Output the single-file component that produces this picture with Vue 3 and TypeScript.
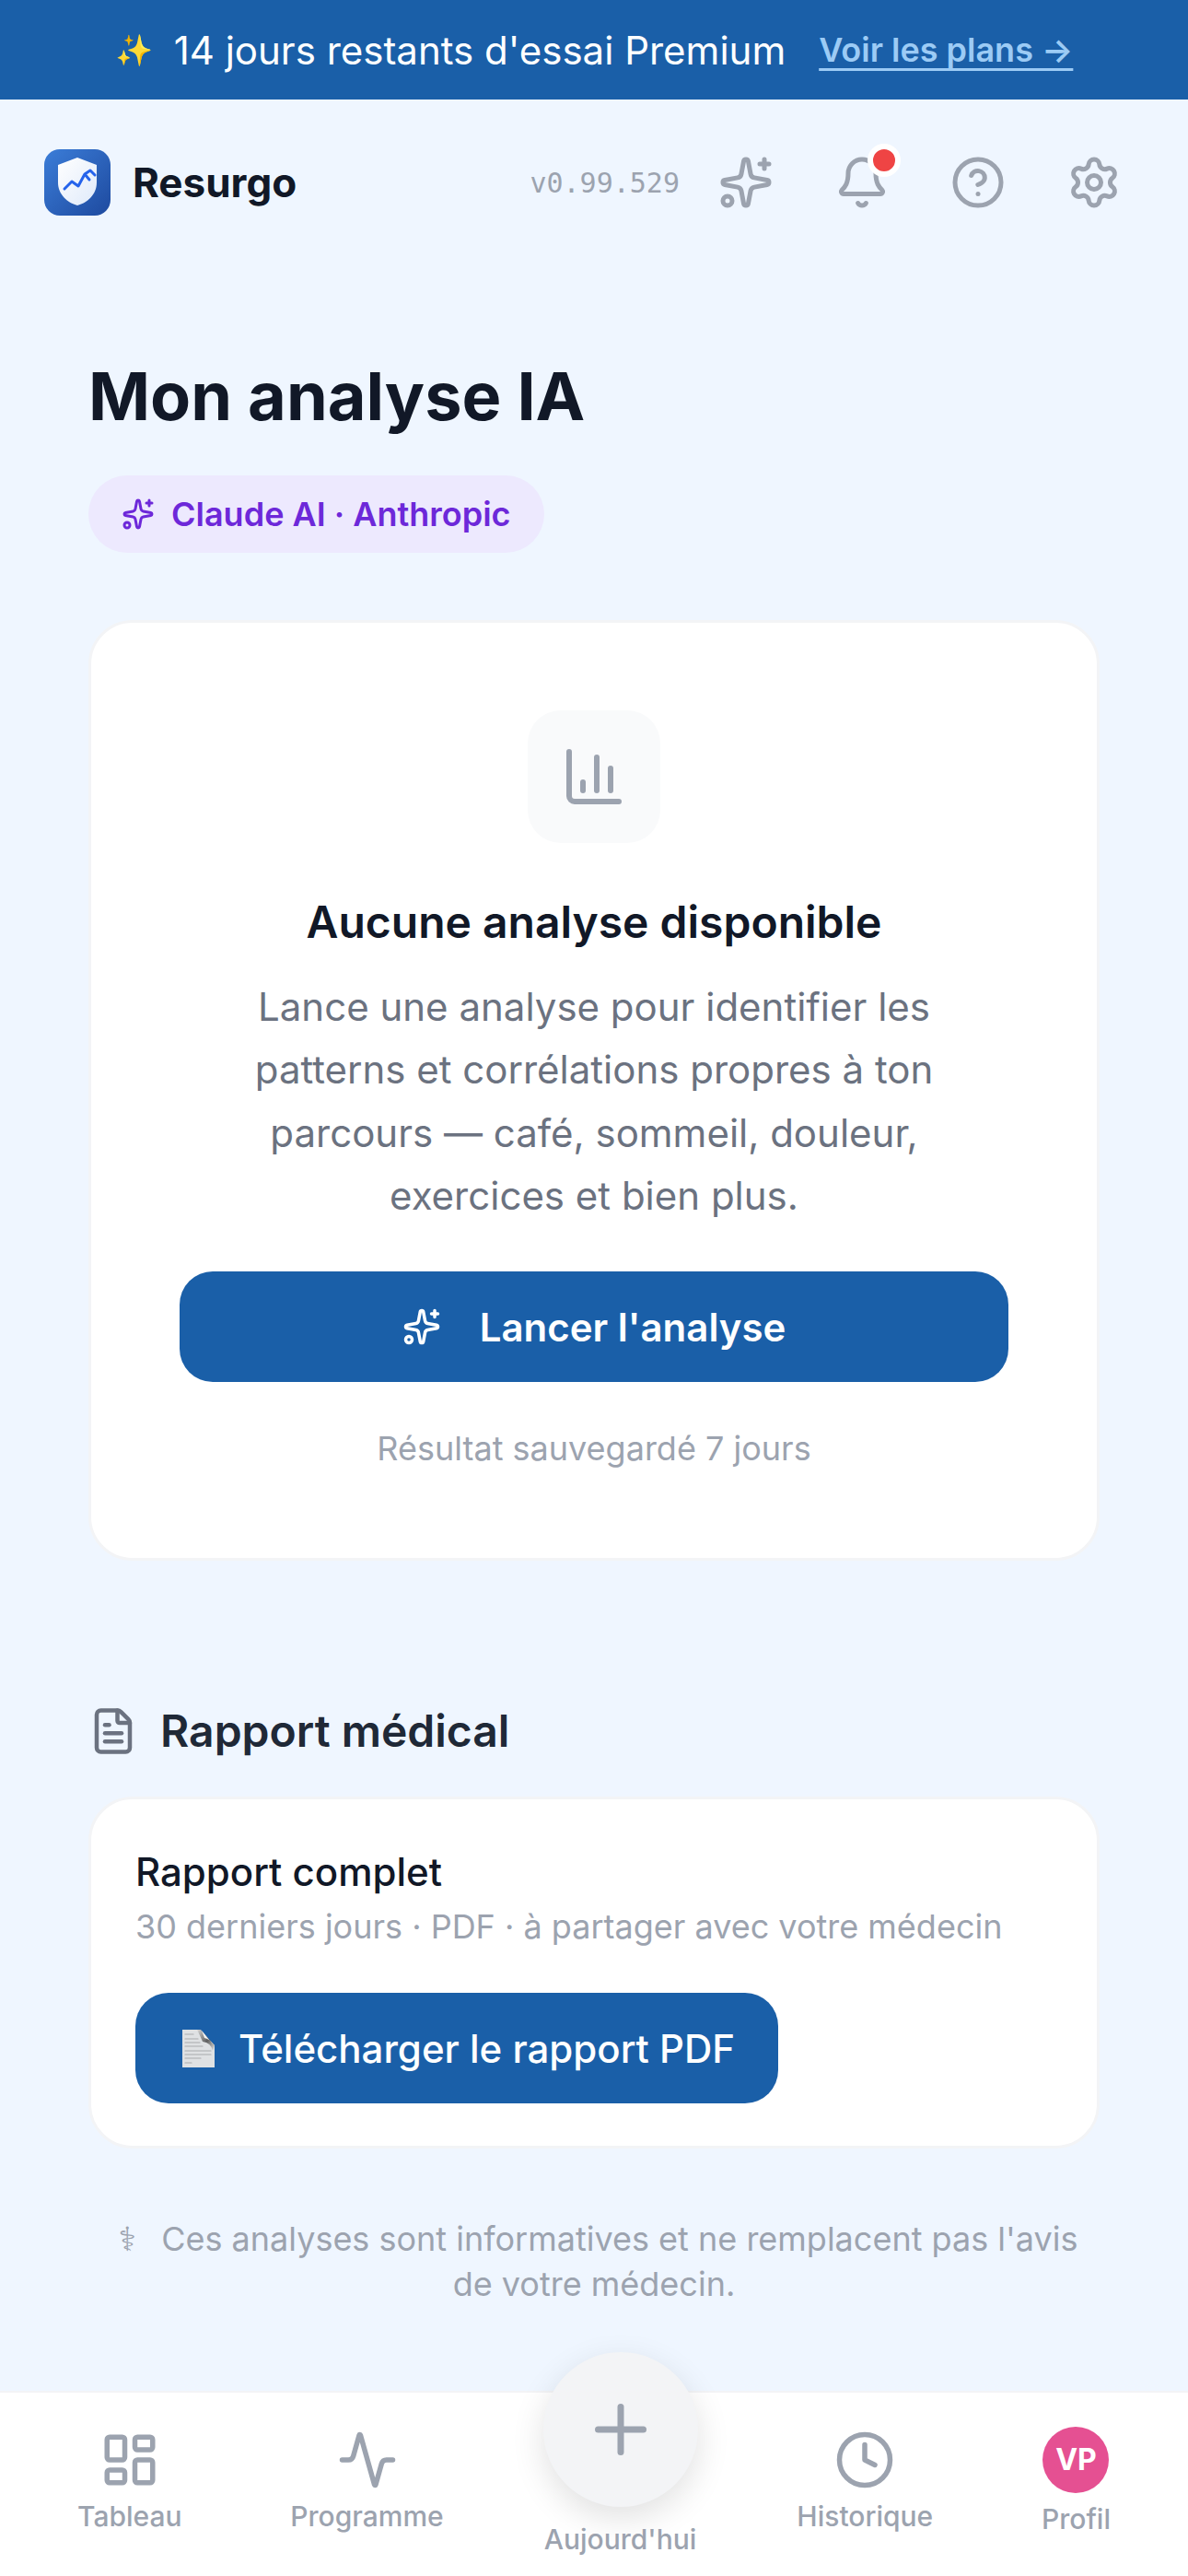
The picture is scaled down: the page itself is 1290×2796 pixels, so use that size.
<script setup lang="ts">
const sparkle = 'M11.017 2.814a1 1 0 0 1 1.966 0l1.051 5.558a2 2 0 0 0 1.594 1.594l5.558 1.051a1 1 0 0 1 0 1.966l-5.558 1.051a2 2 0 0 0-1.594 1.594l-1.051 5.558a1 1 0 0 1-1.966 0l-1.051-5.558a2 2 0 0 0-1.594-1.594l-5.558-1.051a1 1 0 0 1 0-1.966l5.558-1.051a2 2 0 0 0 1.594-1.594z'
const gear = 'M9.671 4.136a2.34 2.34 0 0 1 4.659 0 2.34 2.34 0 0 0 3.319 1.915 2.34 2.34 0 0 1 2.33 4.033 2.34 2.34 0 0 0 0 3.831 2.34 2.34 0 0 1-2.33 4.033 2.34 2.34 0 0 0-3.319 1.915 2.34 2.34 0 0 1-4.659 0 2.34 2.34 0 0 0-3.32-1.915 2.34 2.34 0 0 1-2.33-4.033 2.34 2.34 0 0 0 0-3.831A2.34 2.34 0 0 1 6.35 6.051a2.34 2.34 0 0 0 3.32-1.915'
</script>

<template>
  <div class="page">
    <div class="banner">
      <span class="spark-emoji">✨</span>
      <span class="banner-text">14 jours restants d'essai Premium</span>
      <a class="banner-link">Voir les plans →</a>
    </div>

    <header class="header">
      <div class="brand">
        <svg class="logo" viewBox="0 0 72 72">
          <defs>
            <linearGradient id="logoBg" x1="0" y1="0" x2="1" y2="1">
              <stop offset="0" stop-color="#3b7dd8" />
              <stop offset="1" stop-color="#1e4a9f" />
            </linearGradient>
            <linearGradient id="shield" x1="0" y1="0" x2="1" y2="1">
              <stop offset="0" stop-color="#ffffff" />
              <stop offset="1" stop-color="#dfeafa" />
            </linearGradient>
          </defs>
          <rect width="72" height="72" rx="17" fill="url(#logoBg)" />
          <path fill="url(#shield)" d="M36 9 L57 17 V36 C57 49 47 58 36 61 C25 58 15 49 15 36 V17 Z" />
          <path fill="none" stroke="#2563eb" stroke-width="3" stroke-linecap="round" stroke-linejoin="round" d="M22 43 L30 35 L37 40 L44 27 L49 33 M44 27 L50 23 L55 28" />
        </svg>
        <span class="brand-name">Resurgo</span>
      </div>
      <div class="tools">
        <span class="version">v0.99.529</span>
        <button class="tool">
          <svg class="ic60" viewBox="0 0 24 24"><path :d="sparkle" /><path d="M20 2v4M22 4h-4" /><circle cx="4" cy="20" r="2" /></svg>
        </button>
        <button class="tool">
          <svg class="ic60" viewBox="0 0 24 24"><path d="M10.268 21a2 2 0 0 0 3.464 0" /><path d="M3.262 15.326A1 1 0 0 0 4 17h16a1 1 0 0 0 .74-1.673C19.41 13.956 18 12.499 18 8A6 6 0 0 0 6 8c0 4.499-1.411 5.956-2.738 7.326" /></svg>
          <span class="dot"></span>
        </button>
        <button class="tool">
          <svg class="ic60" viewBox="0 0 24 24"><circle cx="12" cy="12" r="10" /><path d="M9.09 9a3 3 0 0 1 5.83 1c0 2-3 3-3 3" /><path d="M12 17h.01" /></svg>
        </button>
        <button class="tool">
          <svg class="ic60" viewBox="0 0 24 24"><path :d="gear" /><circle cx="12" cy="12" r="3" /></svg>
        </button>
      </div>
    </header>

    <main class="main">
      <h1 class="title">Mon analyse IA</h1>
      <div class="pill">
        <svg class="ic36" viewBox="0 0 24 24"><path :d="sparkle" /><path d="M20 2v4M22 4h-4" /><circle cx="4" cy="20" r="2" /></svg>
        <span>Claude AI · Anthropic</span>
      </div>

      <section class="card empty">
        <div class="tile">
          <svg class="ic72" viewBox="0 0 24 24"><path d="M3 3v16a2 2 0 0 0 2 2h16" /><path d="M18 17V9" /><path d="M13 17V5" /><path d="M8 17v-3" /></svg>
        </div>
        <h2 class="empty-title">Aucune analyse disponible</h2>
        <p class="empty-text">Lance une analyse pour identifier les patterns et corrélations propres à ton parcours — café, sommeil, douleur, exercices et bien plus.</p>
        <button class="primary wide">
          <svg class="ic42" viewBox="0 0 24 24"><path :d="sparkle" /><path d="M20 2v4M22 4h-4" /><circle cx="4" cy="20" r="2" /></svg>
          <span>Lancer l'analyse</span>
        </button>
        <p class="saved">Résultat sauvegardé 7 jours</p>
      </section>

      <div class="section-head">
        <svg class="ic54" viewBox="0 0 24 24"><path d="M6 22a2 2 0 0 1-2-2V4a2 2 0 0 1 2-2h8a2.400 2.400 0 0 1 1.704.706l3.588 3.588A2.400 2.400 0 0 1 20 8v12a2 2 0 0 1-2 2z" /><path d="M14 2v5a1 1 0 0 0 1 1h5" /><path d="M10 9H8" /><path d="M16 13H8" /><path d="M16 17H8" /></svg>
        <h2>Rapport médical</h2>
      </div>

      <section class="card report">
        <h3>Rapport complet</h3>
        <p>30 derniers jours · PDF · à partager avec votre médecin</p>
        <button class="primary pdf">
          <svg class="doc" viewBox="0 0 35 41">
            <defs>
              <linearGradient id="curl" x1="0" y1="0" x2="1" y2="1">
                <stop offset="0" stop-color="#d8d8d8" />
                <stop offset="0.55" stop-color="#5f5f5f" />
                <stop offset="1" stop-color="#e4e4e4" />
              </linearGradient>
            </defs>
            <path fill="#dfe1e3" d="M0 0 H18 L35 17 V41 H0 Z" />
            <path fill="url(#curl)" d="M16 0 L20 0 L35 17 L33 23 Q31 14 22 13 Q19 6 16 0 Z" />
            <path fill="#f4f4f4" d="M21 1 L34 17 Q30 10 24 9 Z" />
            <path stroke="#a9abad" stroke-width="1.200" d="M3 5H12M3 10H17M3 14H19M3 18H22M3 23H31M3 27H31M3 31H20M3 36H10" />
          </svg>
          <span>Télécharger le rapport PDF</span>
        </button>
      </section>

      <p class="note"><span class="caduceus">⚕&#xFE0E;</span> Ces analyses sont informatives et ne remplacent pas l'avis de votre médecin.</p>
    </main>

    <nav class="nav">
      <div class="nav-item">
        <svg class="ic66" viewBox="0 0 24 24"><rect width="7" height="9" x="3" y="3" rx="1" /><rect width="7" height="5" x="14" y="3" rx="1" /><rect width="7" height="9" x="14" y="12" rx="1" /><rect width="7" height="5" x="3" y="16" rx="1" /></svg>
        <span>Tableau</span>
      </div>
      <div class="nav-item">
        <svg class="ic66" viewBox="0 0 24 24"><path d="M22 12h-2.480a2 2 0 0 0-1.930 1.460l-2.350 8.360a.25.25 0 0 1-.480 0L9.240 2.180a.25.25 0 0 0-.480 0l-2.350 8.360A2 2 0 0 1 4.490 12H2" /></svg>
        <span>Programme</span>
      </div>
      <div class="nav-item today">
        <div class="fab">
          <svg class="ic84" viewBox="0 0 24 24"><path d="M5 12h14" /><path d="M12 5v14" /></svg>
        </div>
        <span>Aujourd'hui</span>
      </div>
      <div class="nav-item">
        <svg class="ic66" viewBox="0 0 24 24"><circle cx="12" cy="12" r="10" /><path d="M12 6v6l4 2" /></svg>
        <span>Historique</span>
      </div>
      <div class="nav-item profile">
        <div class="avatar">VP</div>
        <span>Profil</span>
      </div>
    </nav>
  </div>
</template>

<style>
html, body { margin: 0; background: #eff6ff; }
</style>

<style scoped>
* { box-sizing: border-box; }
.page {
  width: 1290px;
  height: 2796px;
  display: flex;
  flex-direction: column;
  background: #eff6ff;
  font-family: Inter, "Noto Sans", "DejaVu Sans", sans-serif;
  overflow: hidden;
}
svg { fill: none; stroke: currentColor; stroke-width: 2; stroke-linecap: round; stroke-linejoin: round; display: block; flex: none; }
.ic36 { width: 36px; height: 36px; }
.ic42 { width: 42px; height: 42px; }
.ic54 { width: 54px; height: 54px; }
.ic60 { width: 60px; height: 60px; }
.ic66 { width: 66px; height: 66px; }
.ic72 { width: 72px; height: 72px; }
.ic84 { width: 84px; height: 84px; }

.banner {
  height: 108px;
  flex: none;
  background: #1a5fa8;
  display: flex;
  align-items: center;
  justify-content: center;
  color: #fff;
}
.spark-emoji { font-size: 33px; margin-right: 23px; }
.banner-text { font-size: 42px; }
.banner-link {
  margin-left: 36px;
  font-size: 36px;
  font-weight: 600;
  color: #9ccbf5;
  text-decoration: underline;
  text-decoration-thickness: 3px;
  text-decoration-skip-ink: none;
  text-underline-offset: 7px;
}

.header {
  height: 180px;
  flex: none;
  display: flex;
  align-items: center;
  justify-content: space-between;
  padding: 0 39px 0 48px;
}
.brand { display: flex; align-items: center; gap: 24px; }
.logo { width: 72px; height: 72px; stroke: none; }
.brand-name { font-size: 44px; font-weight: 700; color: #111827; }
.tools { display: flex; align-items: center; }
.version { font-family: "DejaVu Sans Mono", monospace; font-size: 30px; color: #9ca3af; margin-right: 9px; }
.tool {
  position: relative;
  width: 126px;
  height: 126px;
  display: flex;
  align-items: center;
  justify-content: center;
  border: 0;
  padding: 0;
  background: none;
  color: #9ca3af;
}
.dot {
  position: absolute;
  top: 21px;
  left: 69px;
  width: 36px;
  height: 36px;
  border-radius: 50%;
  background: #ef4444;
  border: 6px solid #fff;
}

.main { flex: 1; padding: 0 96px; display: flex; flex-direction: column; align-items: stretch; }
.title { margin: 102px 0 0; font-size: 72px; line-height: 80px; font-weight: 700; color: #111827; }
.pill {
  align-self: flex-start;
  height: 84px;
  margin-top: 46px;
  padding: 0 36px;
  display: flex;
  align-items: center;
  gap: 18px;
  border-radius: 42px;
  background: #ede9fe;
  color: #6d28d9;
  font-size: 36px;
  font-weight: 600;
}
.card {
  background: #fff;
  border: 3px solid #f3f4f6;
  border-radius: 48px;
}
.empty {
  margin-top: 73px;
  height: 1021px;
  padding-top: 95px;
  display: flex;
  flex-direction: column;
  align-items: center;
}
.tile {
  width: 144px;
  height: 144px;
  border-radius: 36px;
  background: #f9fafb;
  color: #9ca3af;
  display: flex;
  align-items: center;
  justify-content: center;
}
.empty-title { margin: 50px 0 0; font-size: 48px; line-height: 72px; font-weight: 600; color: #111827; }
.empty-text { margin: 22px 0 0; width: 780px; text-align: center; font-size: 42px; line-height: 68.250px; color: #6b7280; }
.primary {
  height: 120px;
  border: 0;
  border-radius: 36px;
  background: #1a5fa8;
  color: #fff;
  font-family: inherit;
  font-size: 42px;
  display: flex;
  align-items: center;
  justify-content: center;
}
.wide { width: 900px; margin-top: 48px; font-weight: 600; gap: 42px; }
.saved { margin: 48px 0 0; font-size: 36px; line-height: 48px; color: #9ca3af; }

.section-head { margin-top: 153px; display: flex; align-items: center; gap: 24px; color: #6b7280; }
.section-head h2 { margin: 0; font-size: 48px; line-height: 64px; font-weight: 600; color: #1f2937; }

.report { margin-top: 39px; height: 382px; padding: 47px 48px 0; }
.report h3 { margin: 0; font-size: 42px; line-height: 64px; font-weight: 500; color: #111827; }
.report p { margin: 0; font-size: 36px; line-height: 54px; color: #9ca3af; }
.pdf { width: 698px; margin-top: 45px; font-weight: 500; justify-content: flex-start; padding: 0 0 0 51px; gap: 26px; }
.doc { width: 35px; height: 41px; stroke: none; }

.note { margin: 74px 8px 0; text-align: center; font-size: 36px; line-height: 48px; color: #9ca3af; }
.caduceus { font-family: "DejaVu Sans", sans-serif; margin: 0 17px 0 9px; }

.nav {
  height: 201px;
  flex: none;
  background: #fff;
  border-top: 2px solid #f3f4f6;
  padding: 0 84px;
  display: flex;
  justify-content: space-between;
  align-items: flex-start;
}
.nav-item {
  display: flex;
  flex-direction: column;
  align-items: center;
  color: #9ca3af;
  font-size: 30px;
  line-height: 44px;
  font-weight: 500;
  padding-top: 40px;
  gap: 6px;
}
.today { margin: -44px -10px 0; padding-top: 0; gap: 13px; }
.fab {
  width: 168px;
  height: 168px;
  border-radius: 50%;
  background: #f3f4f6;
  display: flex;
  align-items: center;
  justify-content: center;
  box-shadow: 0 12px 36px rgba(0, 0, 0, 0.12);
}
.profile { padding-top: 37px; gap: 6px; }
.avatar {
  width: 72px;
  height: 72px;
  border-radius: 50%;
  background: #e55092;
  color: #fff;
  font-size: 32px;
  font-weight: 700;
  display: flex;
  align-items: center;
  justify-content: center;
}
</style>
